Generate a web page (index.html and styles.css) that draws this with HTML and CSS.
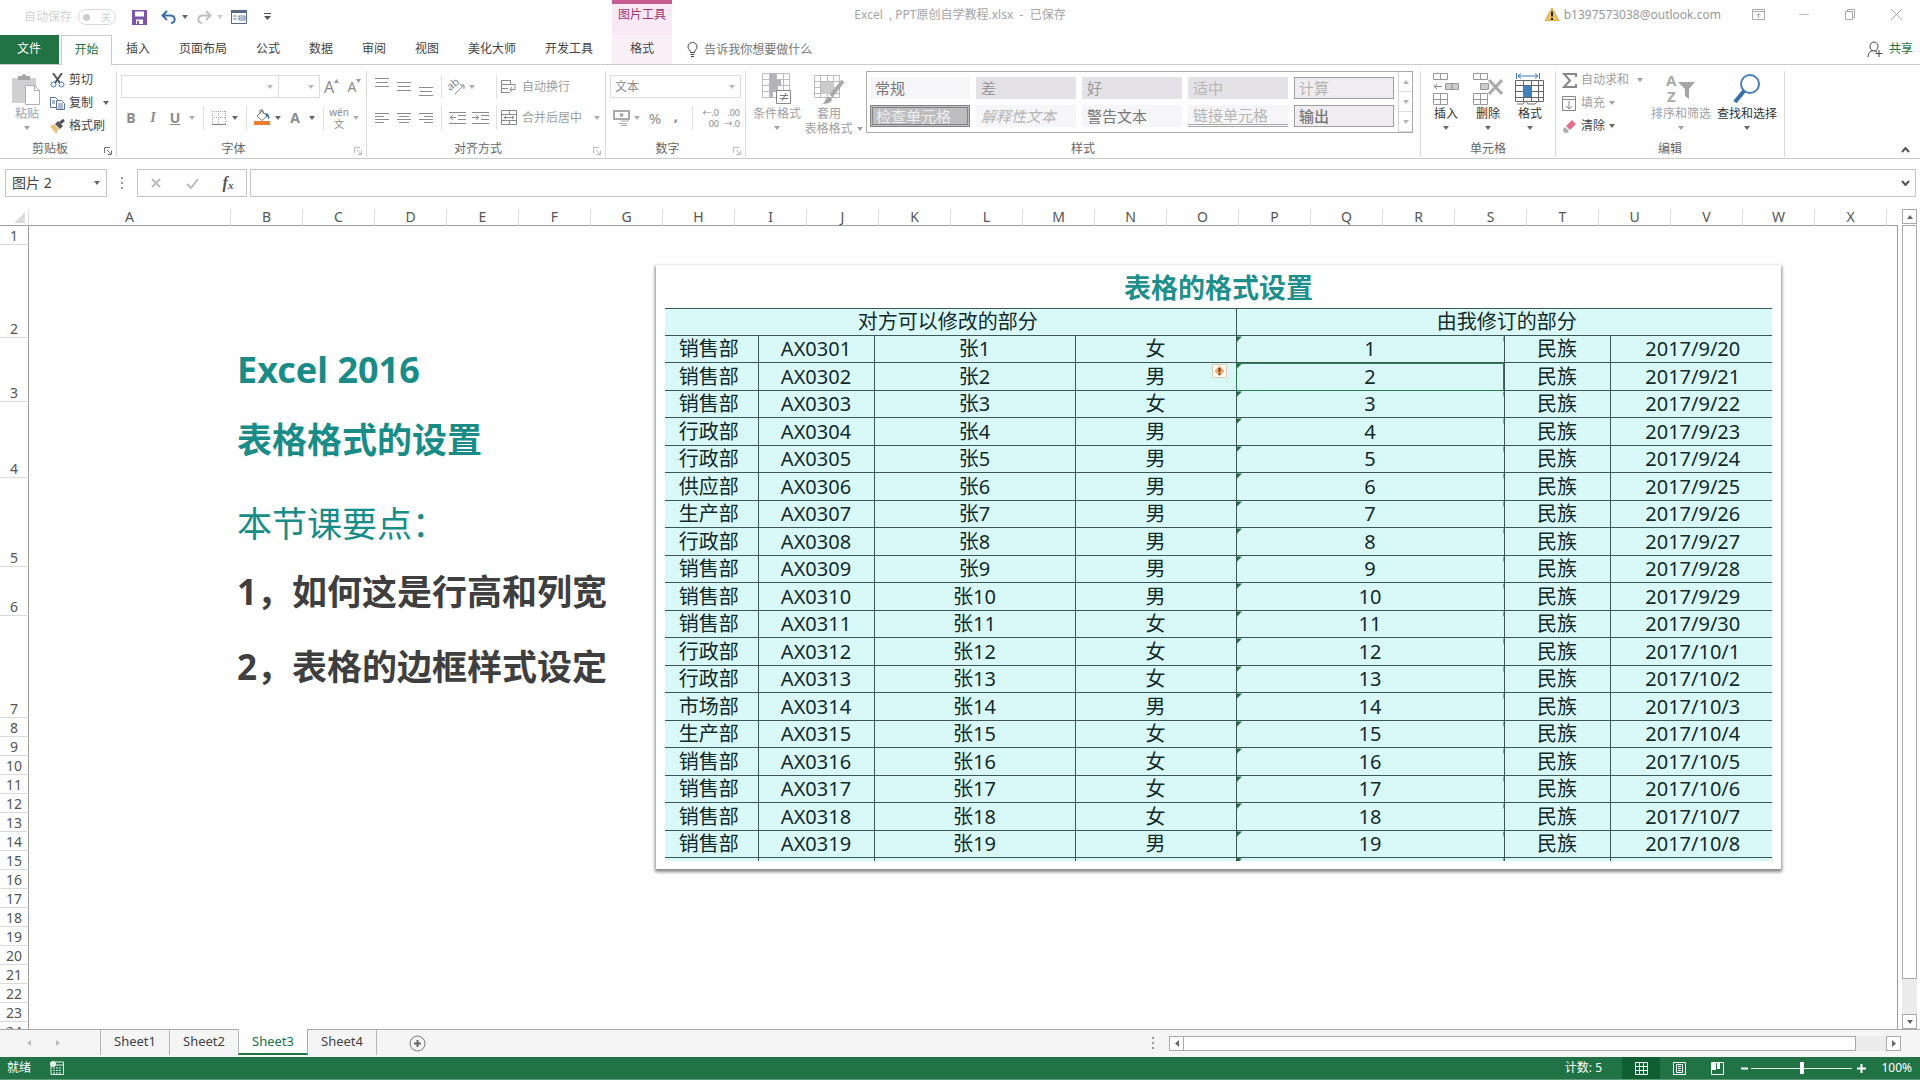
FILE: index.html
```html
<!DOCTYPE html>
<html lang="zh-CN">
<head>
<meta charset="utf-8">
<title>Excel , PPT原创自学教程.xlsx - 已保存</title>
<link rel="stylesheet" href="styles.css">
</head>
<body>
<svg class="defs" aria-hidden="true">
  <symbol id="caret" viewBox="0 0 6 4"><path d="M0 0h6L3 4z" fill="currentColor"/></symbol>
  <symbol id="launch" viewBox="0 0 8 8"><path d="M.5 6V.5H6M3 3l4 4M7.500 3.500v4h-4" fill="none" stroke="currentColor"/></symbol>
</svg>

<header class="titlebar">
  <div class="quick">
    <label class="autosave">自动保存<input type="checkbox" class="switch-input"><span class="switch"><i></i>关</span></label>
    <button class="q" aria-label="保存"><svg width="15" height="15"><path d="M0 0h15v15H0z" fill="#7a55a8"/><path d="M3 1.500h9v5H3zM4 9.500h7V14H4z" fill="#fff"/><path d="M5 11h2v3H5z" fill="#7a55a8"/></svg></button>
    <button class="q undo" aria-label="撤消"><svg width="16" height="14"><path d="M6 1L1.500 5.500 6 10M2 5.500h7c6 0 6 7 1 7.500" fill="none" stroke="#3f6da8" stroke-width="2"/></svg><svg class="caret"><use href="#caret"/></svg></button>
    <button class="q redo" aria-label="恢复"><svg width="16" height="14"><path d="M10 1l4.500 4.500L10 10M14 5.500H7c-6 0-6 7-1 7.500" fill="none" stroke="#bfc1c3" stroke-width="2"/></svg><svg class="caret"><use href="#caret"/></svg></button>
    <button class="q form" aria-label="记录单"><svg width="16" height="14"><path d="M.5.5h15v13H.5z" fill="#fff" stroke="#556a86"/><path d="M0 0h16v3H0z" fill="#556a86"/><path d="M2 6h4M2 9h4M8 6h6v4H8zM8 8h6" fill="none" stroke="#6a84a8"/></svg></button>
    <button class="q more" aria-label="自定义快速访问工具栏"><svg width="7" height="8"><path d="M0 .5h7" stroke="#555"/><path d="M0 3h7L3.500 7z" fill="#555"/></svg></button>
  </div>
  <div class="context-title">图片工具</div>
  <h1 class="doc-title">Excel&nbsp; , PPT原创自学教程.xlsx&nbsp; -&nbsp; 已保存</h1>
  <div class="account">
    <svg width="16" height="14"><path d="M8 1l7 12.500H1z" fill="#e9c46a" stroke="#d9ae4b" stroke-linejoin="round"/><path d="M8 4.500v5M8 11v2" stroke="#222" stroke-width="2"/></svg>
    <span>b1397573038@outlook.com</span>
  </div>
  <div class="window-buttons">
    <button aria-label="功能区显示选项"><svg width="13" height="11"><path d="M.5.500h12v10H.5zM.5 2.500h12M6.500 9V4.500M4.500 6.500l2-2 2 2" fill="none" stroke="#a9a9a9"/></svg></button>
    <button aria-label="最小化"><svg width="10" height="11"><path d="M0 5.500h10" stroke="#bbb"/></svg></button>
    <button aria-label="还原"><svg width="10" height="11"><path d="M.5 2.500h7v8h-7zM2.500 2.500v-2h7v8h-2" fill="none" stroke="#a9a9a9"/></svg></button>
    <button aria-label="关闭"><svg width="11" height="11"><path d="M0 0l11 11M11 0L0 11" stroke="#a9a9a9"/></svg></button>
  </div>
</header>

<nav class="tabs">
  <button class="tab file">文件</button>
  <button class="tab active">开始</button>
  <button class="tab">插入</button>
  <button class="tab">页面布局</button>
  <button class="tab">公式</button>
  <button class="tab">数据</button>
  <button class="tab">审阅</button>
  <button class="tab">视图</button>
  <button class="tab">美化大师</button>
  <button class="tab">开发工具</button>
  <button class="tab context">格式</button>
  <button class="tell-me"><svg width="11" height="15"><path d="M3.500 10.500C3.500 8 1 7.500 1 4.800a4.500 4.300 0 019 0c0 2.700-2.500 3.200-2.500 5.700zM3.500 12.500h4M4 14.500h3" fill="none" stroke="#444"/></svg>告诉我你想要做什么</button>
  <button class="share"><svg width="16" height="17"><path d="M1 16c0-4 2-6 5-6.500M7 1a4 4.500 0 010 9 4 4.500 0 010-9M8 10l2 1M12 9v7M8.500 12.500h7" fill="none" stroke="#444"/></svg>共享</button>
</nav>

<section class="ribbon" aria-label="功能区">
  <div class="group clipboard">
    <div class="body">
      <button class="big off"><svg width="30" height="32"><path d="M0 5h24v25H0z" fill="#d0d0d2"/><path d="M6 7V3h4a2 2 0 014 0h4v4z" fill="#a5a5a7"/><path d="M13.500 12.500h9l5 5v14h-14z" fill="#fff" stroke="#b0b0b2"/><path d="M22.500 12.500v5h5" fill="none" stroke="#b0b0b2"/></svg><span>粘贴</span><svg class="caret"><use href="#caret"/></svg></button>
      <div class="stack">
        <button class="line"><svg width="15" height="15"><path d="M3 0l7 10M12 0L5 10" stroke="#555" stroke-width="2"/><circle cx="3.500" cy="11.500" r="2.500" fill="none" stroke="#3f78b5"/><circle cx="11.500" cy="11.500" r="2.500" fill="none" stroke="#3f78b5"/></svg>剪切</button>
        <button class="line"><svg width="15" height="15"><path d="M.5 1.500h5l2 2v8h-7z" fill="#fff" stroke="#5a7394"/><path d="M6.500 4.500h5l3 3v6h-8z" fill="#fff" stroke="#5a7394"/><path d="M2 5h3M2 7h3M8 8h5M8 10h5M8 12h5" stroke="#5a7394"/></svg>复制<svg class="caret push"><use href="#caret"/></svg></button>
        <button class="line"><svg width="15" height="15"><path d="M0 7l4-2 5 5-3 5z" fill="#eac282"/><path d="M5 5l3-3 5 5-3 3z" fill="#555"/><path d="M10 4l4-3" stroke="#555" stroke-width="3"/></svg>格式刷</button>
      </div>
    </div>
    <div class="label launched">剪贴板<svg class="launch dark"><use href="#launch"/></svg></div>
  </div>

  <div class="group font">
    <div class="body rows">
      <div class="row font-top">
        <select aria-label="字体" class="combo"><option></option></select>
        <select aria-label="字号" class="combo"><option></option></select>
        <button class="glyph" aria-label="增大字号">A<svg width="5" height="4"><path d="M0 4l2.500-4L5 4z" fill="#999"/></svg></button>
        <button class="glyph small" aria-label="减小字号">A<svg width="5" height="4"><path d="M0 0h5L2.500 4z" fill="#999"/></svg></button>
      </div>
      <div class="row font-bottom">
        <button class="bold">B</button><button class="italic">I</button><button class="under">U</button><svg class="caret"><use href="#caret"/></svg><i class="sep"></i>
        <button aria-label="边框"><svg width="14" height="14"><path d="M0 .5h14M0 6.500h14M.5 0v14M6.500 0v14M13.500 0v14" stroke="#a8a8b4" stroke-dasharray="1 1"/><path d="M0 13.500h14" stroke="#888"/></svg></button><svg class="caret dark"><use href="#caret"/></svg><i class="sep"></i>
        <button aria-label="填充颜色"><svg width="17" height="17"><path d="M3 7l5-5 5 5-5 4.500z" fill="#fff" stroke="#777"/><path d="M6 5V1h3v4" fill="none" stroke="#777"/><path d="M11 4c4 0 5 3 4 7-1-3-3-4-4-7" fill="#3f78b5"/><path d="M0 12h16v4H0z" fill="#ed7d31"/></svg></button><svg class="caret dark"><use href="#caret"/></svg>
        <button class="bold">A</button><svg class="caret dark"><use href="#caret"/></svg><i class="sep"></i>
        <button class="pinyin"><span>wén</span><span>文</span></button><svg class="caret"><use href="#caret"/></svg>
      </div>
    </div>
    <div class="label launched">字体<svg class="launch"><use href="#launch"/></svg></div>
  </div>

  <div class="group align">
    <div class="body rows">
      <div class="row align-row">
        <button aria-label="顶端对齐"><svg width="14" height="18"><path d="M0 .5h14M1 4.500h12M0 8.500h14" stroke="#8c8c8c"/></svg></button>
        <button aria-label="垂直居中"><svg width="14" height="18"><path d="M0 4.500h14M1 8.500h12M0 12.500h14" stroke="#8c8c8c"/></svg></button>
        <button aria-label="底端对齐"><svg width="14" height="18"><path d="M0 9.500h14M1 13.500h12M0 17.500h14" stroke="#8c8c8c"/></svg></button>
        <i class="sep"></i>
        <button aria-label="方向"><svg width="17" height="16" class="spill"><text x="0" y="9" transform="rotate(-40 5 9)" font-size="11" fill="#888">ab</text><path d="M6 15l9-9M11 6h4v4" fill="none" stroke="#888"/></svg></button><svg class="caret"><use href="#caret"/></svg><i class="sep"></i>
        <button class="text off"><svg width="16" height="15"><path d="M0 1.500h9M0 5.500h7M0 9.500h7M0 13.500h9M.5 1v13M9.500 1v4M5 5.500h9v5h-5M11 8l-2 2.500 2 2.500" fill="none" stroke="#8c8c8c"/></svg>自动换行</button>
      </div>
      <div class="row align-row">
        <button aria-label="左对齐"><svg width="14" height="14"><path d="M0 2.500h14M0 5.500h9M0 8.500h14M0 11.500h9" stroke="#8c8c8c"/></svg></button>
        <button aria-label="居中"><svg width="14" height="14"><path d="M0 2.500h14M2 5.500h10M0 8.500h14M2 11.500h10" stroke="#8c8c8c"/></svg></button>
        <button aria-label="右对齐"><svg width="14" height="14"><path d="M0 2.500h14M5 5.500h9M0 8.500h14M5 11.500h9" stroke="#8c8c8c"/></svg></button>
        <i class="sep"></i>
        <button aria-label="减少缩进量"><svg width="17" height="14"><path d="M0 1.500h17M9 4.500h8M9 8.500h8M0 12.500h17M1 6.500h6M4 4L1 6.500 4 9" fill="none" stroke="#8c8c8c"/></svg></button>
        <button aria-label="增加缩进量"><svg width="17" height="14"><path d="M0 1.500h17M9 4.500h8M9 8.500h8M0 12.500h17M0 6.500h6M4 4l3 2.500L4 9" fill="none" stroke="#8c8c8c"/></svg></button>
        <i class="sep"></i>
        <button class="text off"><svg width="16" height="15"><path d="M.5.500h15v14H.500zM0 4.500h16M0 10.500h16M8.500 0v4M8.500 11v4M3 7.500h10M5 6L3 7.500 5 9M11 6l2 1.500L11 9" fill="none" stroke="#8c8c8c"/></svg>合并后居中<svg class="caret push"><use href="#caret"/></svg></button>
      </div>
    </div>
    <div class="label launched">对齐方式<svg class="launch"><use href="#launch"/></svg></div>
  </div>

  <div class="group number">
    <div class="body rows">
      <div class="row"><select aria-label="数字格式" class="combo format"><option>文本</option></select></div>
      <div class="row number-bottom">
        <button aria-label="会计数字格式"><svg width="17" height="16"><path d="M1 1h15v8H1z" fill="none" stroke="#aaa" stroke-width="2"/><circle cx="8.500" cy="5" r="2" fill="#aaa"/><path d="M8 11h8M6 13.500h8M8 15.500h6" stroke="#aaa"/></svg></button><svg class="caret"><use href="#caret"/></svg>
        <button class="pct">%</button><button class="pct comma">,</button><i class="sep"></i>
        <button class="dec"><span>←.0</span><span>00</span></button>
        <button class="dec"><span>.00</span><span>→.0</span></button>
      </div>
    </div>
    <div class="label launched">数字<svg class="launch"><use href="#launch"/></svg></div>
  </div>

  <div class="group styles">
    <div class="body">
      <button class="big off wide"><svg width="30" height="32"><path d="M.5.500h27v24H.500zM0 6.500h28M0 12.500h28M0 18.500h28M7.500 0v25M14.500 0v25M21.500 0v25" fill="#fff" stroke="#bbb"/><path d="M8 1h6v6h5v6h-3v6h-5v6H8z" fill="#b4b4b6"/><path d="M14.500 17.500h14v13h-14z" fill="#fff" stroke="#888"/><path d="M18 22.500h8M18 25.500h8M24 20l-4 8" stroke="#777"/></svg><span>条件格式</span><svg class="caret"><use href="#caret"/></svg></button>
      <button class="big off wide"><svg width="30" height="32"><path d="M.5 2.500h25v22H.5zM0 8.500h26M0 14.500h26M0 20.500h26M6.500 2v22M13.500 2v22M19.500 2v22" fill="#fff" stroke="#bbb"/><path d="M7 9h13v12H7z" fill="#ccc"/><path d="M29 8L17 23" stroke="#aaa" stroke-width="4"/><path d="M8 31c4-1 2-6 7-7 5 1 4 7-7 7z" fill="#a5a5a5"/></svg><span>套用</span><span class="with-caret">表格格式 <svg class="caret"><use href="#caret"/></svg></span></button>
      <div class="gallery">
        <div class="swatches">
          <button class="sw">常规</button><button class="sw gray">差</button><button class="sw gray">好</button><button class="sw gray faint">适中</button><button class="sw boxed faint">计算</button>
          <button class="sw check">检查单元格</button><button class="sw faint italic-sw">解释性文本</button><button class="sw">警告文本</button><button class="sw faint linked">链接单元格</button><button class="sw boxed output">输出</button>
        </div>
        <div class="gallery-scroll">
          <button aria-label="上一行"><svg class="caret flip"><use href="#caret"/></svg></button>
          <button aria-label="下一行"><svg class="caret"><use href="#caret"/></svg></button>
          <button aria-label="其他"><svg class="caret"><use href="#caret"/></svg></button>
        </div>
      </div>
    </div>
    <div class="label">样式</div>
  </div>

  <div class="group cells">
    <div class="body">
      <button class="big"><svg width="28" height="32"><path d="M1.500.500h14v6h-14zM8.500 0v7M1.500 20.500h14v11h-14zM8.500 20v12M1 26.500h15" fill="#fff" stroke="#999"/><path d="M13.500 10.500h13v6h-13z" fill="#ccc" stroke="#999"/><path d="M20 10v7M2 13.500h8M5 11l-3 2.500L5 16" fill="none" stroke="#888"/></svg><span>插入</span><svg class="caret"><use href="#caret"/></svg></button>
      <button class="big"><svg width="30" height="32"><path d="M.5.500h14v6H.500zM7.500 0v7M.5 20.500h14v11H.500zM7.500 20v12M0 26.500h15" fill="#fff" stroke="#999"/><path d="M7.500 10.500h8v6h-8z" fill="#ccc" stroke="#999"/><path d="M16 7l13 14M29 7L16 21" stroke="#aaa" stroke-width="3"/></svg><span>删除</span><svg class="caret"><use href="#caret"/></svg></button>
      <button class="big"><svg width="30" height="32"><path d="M1.500 0v6M24.500 0v6M3 3h20M6 .5L3 3l3 2.500M20 .5L23 3l-3 2.500" fill="none" stroke="#3f78b5"/><path d="M.5 7.500h28v21H.5zM0 12.500h29M0 18.500h29M0 24.500h29M8.500 7v22M16.500 7v22M23.500 7v22" fill="#fff" stroke="#666"/><path d="M8 13h9v11H8z" fill="#3f83bd"/><path d="M2 31h6l3-3 2 3h7l3-3" fill="none" stroke="#777"/></svg><span>格式</span><svg class="caret"><use href="#caret"/></svg></button>
    </div>
    <div class="label">单元格</div>
  </div>

  <div class="group editing">
    <div class="body">
      <div class="stack">
        <button class="line off"><svg width="15" height="15"><path d="M14 4V1H2l6 6.500L2 14h12v-3" fill="none" stroke="#888" stroke-width="2"/></svg>自动求和<svg class="caret push"><use href="#caret"/></svg></button>
        <button class="line off"><svg width="15" height="15"><path d="M.5.500h13v14H.500zM0 3.500h14M7 5v8M4 10l3 3 3-3" fill="none" stroke="#888"/></svg>填充<svg class="caret near"><use href="#caret"/></svg></button>
        <button class="line"><svg width="15" height="15"><path d="M4 7l6-6 4 4-6 6z" fill="#e0708c"/><path d="M3 8l4 4-2 2H3L1 12v-2z" fill="#b0b0b4"/></svg>清除<svg class="caret near"><use href="#caret"/></svg></button>
      </div>
      <button class="big off five"><svg width="30" height="32" class="spill"><text x="0" y="13" font-size="15" font-weight="700" fill="#aaa">A</text><text x="1" y="29" font-size="15" font-weight="700" fill="#aaa">Z</text><path d="M12 9h17l-6 7v10l-4-3v-7z" fill="#a5a5a5"/></svg><span>排序和筛选</span><svg class="caret"><use href="#caret"/></svg></button>
      <button class="big five"><svg width="30" height="32"><circle cx="18" cy="11" r="9" fill="none" stroke="#4a7fb8" stroke-width="2"/><path d="M12 18L3 29" stroke="#3a6ea8" stroke-width="4"/></svg><span>查找和选择</span><svg class="caret"><use href="#caret"/></svg></button>
    </div>
    <div class="label">编辑</div>
  </div>
  <button class="collapse" aria-label="折叠功能区"><svg width="9" height="6"><path d="M1 5l3.500-4L8 5" fill="none" stroke="#555" stroke-width="2"/></svg></button>
</section>

<section class="formula-bar">
  <div class="name-box"><input aria-label="名称框" value="图片 2"><svg class="caret"><use href="#caret"/></svg></div>
  <i class="dots"></i>
  <div class="fx-buttons">
    <button aria-label="取消"><svg width="10" height="10"><path d="M1 1l8 8M9 1L1 9" stroke="#bbb" stroke-width="2"/></svg></button>
    <button aria-label="输入"><svg width="13" height="11"><path d="M1 6l4 4 7-9" fill="none" stroke="#bbb" stroke-width="2"/></svg></button>
    <button class="fx">f<small>x</small></button>
  </div>
  <div class="formula"><input aria-label="编辑栏"><svg width="9" height="6"><path d="M1 1l3.500 4L8 1" fill="none" stroke="#555" stroke-width="2"/></svg></div>
</section>

<main class="workspace">
  <div class="canvas">
    <table class="sheet">
      <colgroup><col class="c-head"><col class="c-a"><col class="c-n" span="23"><col></colgroup>
      <thead><tr><th class="corner"><svg width="11" height="11"><path d="M11 0v11H0z" fill="#dcdcdc"/></svg></th><th>A</th><th>B</th><th>C</th><th>D</th><th>E</th><th>F</th><th>G</th><th>H</th><th>I</th><th>J</th><th>K</th><th>L</th><th>M</th><th>N</th><th>O</th><th>P</th><th>Q</th><th>R</th><th>S</th><th>T</th><th>U</th><th>V</th><th>W</th><th>X</th><th class="rest"></th></tr></thead>
      <tbody>
        <tr><th>1</th><td></td><td colspan="24"></td></tr>
        <tr class="r2"><th>2</th><td></td><td colspan="24"></td></tr>
        <tr class="r3"><th>3</th><td></td><td colspan="24" class="teal strong latin">Excel 2016</td></tr>
        <tr class="r4"><th>4</th><td></td><td colspan="24" class="teal strong">表格格式的设置</td></tr>
        <tr class="r5"><th>5</th><td></td><td colspan="24" class="teal">本节课要点<span class="colon">：</span></td></tr>
        <tr class="r6"><th>6</th><td></td><td colspan="24" class="strong">1，如何这是行高和列宽</td></tr>
        <tr class="r7"><th>7</th><td></td><td colspan="24" class="strong">2，表格的边框样式设定</td></tr>
        <tr><th>8</th><td></td><td colspan="24"></td></tr>
        <tr><th>9</th><td></td><td colspan="24"></td></tr>
        <tr><th>10</th><td></td><td colspan="24"></td></tr>
        <tr><th>11</th><td></td><td colspan="24"></td></tr>
        <tr><th>12</th><td></td><td colspan="24"></td></tr>
        <tr><th>13</th><td></td><td colspan="24"></td></tr>
        <tr><th>14</th><td></td><td colspan="24"></td></tr>
        <tr><th>15</th><td></td><td colspan="24"></td></tr>
        <tr><th>16</th><td></td><td colspan="24"></td></tr>
        <tr><th>17</th><td></td><td colspan="24"></td></tr>
        <tr><th>18</th><td></td><td colspan="24"></td></tr>
        <tr><th>19</th><td></td><td colspan="24"></td></tr>
        <tr><th>20</th><td></td><td colspan="24"></td></tr>
        <tr><th>21</th><td></td><td colspan="24"></td></tr>
        <tr><th>22</th><td></td><td colspan="24"></td></tr>
        <tr><th>23</th><td></td><td colspan="24"></td></tr>
        <tr><th>24</th><td></td><td colspan="24"></td></tr>
      </tbody>
    </table>

    <figure class="picture">
      <table class="data">
        <caption>表格的格式设置</caption>
        <colgroup><col class="d1"><col class="d2"><col class="d3"><col class="d4"><col class="d5"><col class="d6"><col class="d7"></colgroup>
        <thead><tr><th colspan="4">对方可以修改的部分</th><th colspan="3">由我修订的部分</th></tr></thead>
        <tbody>
          <tr><td>销售部</td><td>AX0301</td><td>张1</td><td>女</td><td>1</td><td>民族</td><td>2017/9/20</td></tr>
          <tr><td>销售部</td><td>AX0302</td><td>张2</td><td class="flagged">男<svg class="alert" width="15" height="14"><path d="M.5.500h14v13H.500z" fill="#fff" stroke="#e3c9b4"/><path d="M7.500 1.500l5 5.500-5 5.500-5-5.500z" fill="#f0a868"/><path d="M7.500 4v4M7.500 9v1.500" stroke="#6b3d1c" stroke-width="2"/></svg></td><td class="picked">2</td><td>民族</td><td>2017/9/21</td></tr>
          <tr><td>销售部</td><td>AX0303</td><td>张3</td><td>女</td><td>3</td><td>民族</td><td>2017/9/22</td></tr>
          <tr><td>行政部</td><td>AX0304</td><td>张4</td><td>男</td><td>4</td><td>民族</td><td>2017/9/23</td></tr>
          <tr><td>行政部</td><td>AX0305</td><td>张5</td><td>男</td><td>5</td><td>民族</td><td>2017/9/24</td></tr>
          <tr><td>供应部</td><td>AX0306</td><td>张6</td><td>男</td><td>6</td><td>民族</td><td>2017/9/25</td></tr>
          <tr><td>生产部</td><td>AX0307</td><td>张7</td><td>男</td><td>7</td><td>民族</td><td>2017/9/26</td></tr>
          <tr><td>行政部</td><td>AX0308</td><td>张8</td><td>男</td><td>8</td><td>民族</td><td>2017/9/27</td></tr>
          <tr><td>销售部</td><td>AX0309</td><td>张9</td><td>男</td><td>9</td><td>民族</td><td>2017/9/28</td></tr>
          <tr><td>销售部</td><td>AX0310</td><td>张10</td><td>男</td><td>10</td><td>民族</td><td>2017/9/29</td></tr>
          <tr><td>销售部</td><td>AX0311</td><td>张11</td><td>女</td><td>11</td><td>民族</td><td>2017/9/30</td></tr>
          <tr><td>行政部</td><td>AX0312</td><td>张12</td><td>女</td><td>12</td><td>民族</td><td>2017/10/1</td></tr>
          <tr><td>行政部</td><td>AX0313</td><td>张13</td><td>女</td><td>13</td><td>民族</td><td>2017/10/2</td></tr>
          <tr><td>市场部</td><td>AX0314</td><td>张14</td><td>男</td><td>14</td><td>民族</td><td>2017/10/3</td></tr>
          <tr><td>生产部</td><td>AX0315</td><td>张15</td><td>女</td><td>15</td><td>民族</td><td>2017/10/4</td></tr>
          <tr><td>销售部</td><td>AX0316</td><td>张16</td><td>女</td><td>16</td><td>民族</td><td>2017/10/5</td></tr>
          <tr><td>销售部</td><td>AX0317</td><td>张17</td><td>女</td><td>17</td><td>民族</td><td>2017/10/6</td></tr>
          <tr><td>销售部</td><td>AX0318</td><td>张18</td><td>女</td><td>18</td><td>民族</td><td>2017/10/7</td></tr>
          <tr><td>销售部</td><td>AX0319</td><td>张19</td><td>男</td><td>19</td><td>民族</td><td>2017/10/8</td></tr>
          <tr class="stub"><td></td><td></td><td></td><td></td><td></td><td></td><td></td></tr>
        </tbody>
      </table>
    </figure>
  </div>
  <div class="vscroll">
    <button class="arrow" aria-label="向上滚动"><svg class="caret flip"><use href="#caret"/></svg></button>
    <div class="thumb"></div><div class="track"></div>
    <button class="arrow" aria-label="向下滚动"><svg class="caret"><use href="#caret"/></svg></button>
  </div>
</main>

<footer class="sheetbar">
  <div class="sheet-nav"><button aria-label="上一张"><svg width="4" height="6"><path d="M4 0v6L0 3z" fill="#bbb"/></svg></button><button aria-label="下一张"><svg width="4" height="6"><path d="M0 0v6l4-3z" fill="#bbb"/></svg></button></div>
  <button class="sheet-tab">Sheet1</button><button class="sheet-tab">Sheet2</button><button class="sheet-tab current">Sheet3</button><button class="sheet-tab last">Sheet4</button>
  <button class="add" aria-label="新工作表"><svg width="17" height="17"><circle cx="8.500" cy="8.500" r="7.500" fill="none" stroke="#777"/><path d="M8.500 5v7M5 8.500h7" stroke="#666" stroke-width="2"/></svg></button>
  <i class="dots hdots"></i>
  <div class="hscroll">
    <button class="arrow" aria-label="向左滚动"><svg width="4" height="7"><path d="M4 0v7L0 3.500z" fill="#666"/></svg></button>
    <div class="thumb"></div><div class="track"></div>
    <button class="arrow" aria-label="向右滚动"><svg width="4" height="7"><path d="M0 0v7l4-3.500z" fill="#666"/></svg></button>
  </div>
</footer>

<div class="status">
  <span>就绪</span>
  <svg class="macro" width="14" height="14"><path d="M1 4h12.500v9.500H1zM5 1h8.500v3" fill="none" stroke="#e4f3ea"/><path d="M3 7h9M3 9.500h9M3 12h9" stroke="#e4f3ea" stroke-dasharray="2 1"/><circle cx="3" cy="3" r="3" fill="#e4f3ea"/></svg>
  <span class="count">计数: 5</span>
  <button class="view on" aria-label="普通"><svg width="13" height="13"><path d="M.5.500h12v12H.500zM4.500 0v13M8.500 0v13M0 4.500h13M0 8.500h13" fill="none" stroke="#fff"/></svg></button>
  <button class="view" aria-label="页面布局"><svg width="13" height="13"><path d="M.5.500h12v12H.500zM3.500 2.500h6v8h-6zM5 4.500h3M5 6.500h3M5 8.500h3" fill="none" stroke="#fff"/></svg></button>
  <button class="view" aria-label="分页预览"><svg width="13" height="13"><path d="M.5.500h12v12H.500z" fill="none" stroke="#fff"/><path d="M1 1h4v7H1zM6 1h3v6H6z" fill="#fff"/></svg></button>
  <button class="zoom-step" aria-label="缩小"><svg width="7" height="7"><path d="M0 3.500h7" stroke="#fff" stroke-width="2"/></svg></button>
  <input type="range" class="zoom" aria-label="显示比例" min="0" max="100" value="50">
  <button class="zoom-step" aria-label="放大"><svg width="9" height="9"><path d="M0 4.500h9M4.500 0v9" stroke="#fff" stroke-width="2"/></svg></button>
  <span class="percent">100%</span>
</div>
</body>
</html>
```
FILE: styles.css
```css
* { box-sizing: border-box; }

body {
  margin: 0;
  height: 100vh;
  display: flex;
  flex-direction: column;
  overflow: hidden;
  background: #fdfefd;
  color: #444;
  font: 12px/16px "Noto Sans", "Noto Sans CJK SC", sans-serif;
}

button, input, select {
  font: inherit;
  color: inherit;
  margin: 0;
  padding: 0;
  border: 0;
  background: none;
  border-radius: 0;
  white-space: nowrap;
}

svg { display: block; flex: none; }
.defs { width: 0; height: 0; position: absolute; }
.spill { overflow: visible; }
.caret { width: 6px; height: 4px; color: #666; }
.flip { transform: rotate(180deg); }

/* title bar */
.titlebar {
  height: 35px;
  flex: none;
  display: grid;
  grid-template-columns: 612px 60px 1fr auto auto;
  position: relative;
}
.quick { display: flex; align-items: center; padding: 0 0 1px 24px; }
.quick .caret { margin-left: 5px; }
.q { display: flex; align-items: center; margin-left: 14px; }
.autosave { display: flex; align-items: center; gap: 6px; color: #d2d2d2; }
.autosave + .q { margin-left: 16px; }
.switch-input { position: absolute; opacity: 0; }
.switch {
  width: 38px;
  height: 16px;
  border: 1px solid #d8d8d8;
  border-radius: 8px;
  display: flex;
  align-items: center;
  justify-content: space-between;
  padding: 0 4px;
  font-size: 10px;
}
.switch i { width: 7px; height: 7px; border-radius: 4px; background: #ccc; }
.redo, .redo .caret { color: #ccc; }
.q.redo { margin-left: 8px; }
.q.form { margin-left: 8px; }
.q.more { margin-left: 17px; }
.context-title {
  border-top: 4px solid #c75b90;
  background: #f9e9f4;
  color: #a03672;
  text-align: center;
  padding-top: 3px;
}
.doc-title {
  position: absolute;
  left: 0;
  right: 0;
  top: 7px;
  margin: 0;
  text-align: center;
  font-size: 12px;
  font-weight: 400;
  color: #a5a5a5;
}
.account { grid-column: 4; display: flex; gap: 4px; padding-top: 7px; color: #999; }
.window-buttons { display: flex; align-items: flex-start; padding: 9px 1px 0 0; margin-left: 14px; }
.window-buttons button { width: 46px; height: 12px; display: flex; justify-content: center; }

/* ribbon tabs */
.tabs { height: 30px; flex: none; display: flex; border-bottom: 1px solid #c9cdca; }
.tab { padding: 0 15px 1px 14px; color: #444; }
.tab.file { width: 59px; background: #217346; color: #fff; margin-right: 2px; }
.tab.active {
  width: 51px;
  padding: 0 0 2px;
  border: 1px solid #c9cdca;
  border-bottom: 0;
  background: #fdfefd;
  margin-bottom: -1px;
  color: #217346;
}
.tab.context { margin-left: 4px; width: 60px; padding: 0 0 1px; background: #f9eff7; }
.tell-me { display: flex; align-items: center; gap: 6px; margin-left: 15px; color: #767676; }
.share { display: flex; align-items: center; gap: 6px; margin-left: auto; padding: 0 7px 1px 0; color: #217346; }

/* ribbon */
.ribbon { height: 94px; flex: none; display: flex; padding-top: 6px; border-bottom: 1px solid #c9cdca; }
.group { height: 86px; display: flex; flex-direction: column; border-right: 1px solid #dadcda; flex: none; }
.body { height: 70px; display: flex; }
.label { height: 16px; line-height: 16px; text-align: center; color: #666; position: relative; }
.launched { padding-right: 16px; }
.launch { position: absolute; right: 4px; top: 6px; width: 8px; height: 8px; color: #bbb; }
.launch.dark { color: #777; }
.clipboard { width: 117px; }
.font { width: 250px; }
.align { width: 239px; }
.number { width: 140px; }
.styles { width: 675px; }
.cells { width: 135px; }
.editing { width: 229px; }

.big { width: 42px; display: flex; flex-direction: column; align-items: center; padding-top: 2px; color: #333; }
.big > span { line-height: 15px; }
.big > svg:first-child + span { padding-top: 1px; }
.big > .caret { margin-top: 5px; }
.big.wide { width: 52px; }
.big.five { width: 66px; }
.off, .off .caret { color: #a0a0a0; }
.with-caret { display: flex; align-items: center; gap: 4px; margin-left: 9px; }
.clipboard .body { padding-left: 6px; }
.stack { display: flex; flex-direction: column; }
.line { height: 23px; display: flex; align-items: center; gap: 4px; }
.stack .line { padding: 0 0 5px; }
.clipboard .line { margin-left: 2px; }
.line .caret { margin-left: 4px; }
.line .near { margin-left: 0; }
.push { margin-left: 8px; }
.clipboard .push { margin-left: 6px; }

.rows { flex-direction: column; }
.row { height: 31px; display: flex; align-items: center; color: #8c8c8c; }
.row .caret { color: #b0b0b0; justify-self: center; }
.row .caret.dark { color: #666; }
.row button { display: flex; align-items: center; justify-content: center; }
.sep { width: 1px; height: 24px; background: #dfe1df; justify-self: center; }
.combo {
  appearance: none;
  height: 23px;
  border: 1px solid #dcdcdc;
  padding: 0 4px;
  background: url("data:image/svg+xml,%3Csvg xmlns='http://www.w3.org/2000/svg' width='6' height='4'%3E%3Cpath d='M0 0h6L3 4z' fill='%23bbb'/%3E%3C/svg%3E") no-repeat right 5px center;
}
.font-top { display: grid; grid-template-columns: 158px 41px 23px 23px; padding-left: 4px; }
.combo + .combo { border-left: 0; }
.row .glyph { font-size: 16px; align-items: flex-start; }
.row .glyph.small { font-size: 14px; }
.font-bottom {
  display: grid;
  grid-template-columns: 22px 22px 22px 12px 10px 22px 10px 12px 20px 12px 22px 12px 10px 22px 12px;
  padding-left: 3px;
  font-size: 14px;
}
.row .bold { font-weight: 700; }
.italic { font-family: "Liberation Serif", serif; font-style: italic; font-weight: 700; }
.under { text-decoration: underline; font-weight: 700; }
.row .pinyin { flex-direction: column; font-size: 10px; line-height: 12px; }
.align-row { display: grid; grid-template-columns: 22px 22px 22px 9px 23px 23px 9px 1fr; padding-left: 4px; }
.align-row .caret { margin-right: 18px; }
.align-row .text { justify-content: flex-start; gap: 5px; }
.align-row .text .caret { margin: 0 0 0 7px; }
.format { width: 131px; margin-left: 4px; }
.number-bottom { display: grid; grid-template-columns: 18px 14px 22px 20px 12px 21px 21px; padding-left: 6px; }
.row .pct { font-size: 15px; }
.row .comma { font-weight: 700; padding-bottom: 6px; }
.row .dec { flex-direction: column; font-size: 9px; line-height: 11px; align-items: flex-end; }

.styles .body { padding-left: 5px; }
.gallery { display: flex; margin-left: 11px; height: 62px; border: 1px solid #a9aba9; }
.swatches { display: grid; grid-template-columns: repeat(5, 100px); gap: 6px; align-content: start; padding: 5px 4px 0 3px; }
.sw { height: 22px; font-size: 15px; line-height: 20px; text-align: left; padding-left: 5px; background: #f6f5f7; color: #777; }
.gray { background: #e4e2e6; color: #999; }
.faint { color: #b5b5b5; }
.boxed { border: 1px solid #a0a0a0; background: #efedf1; padding-left: 4px; }
.output { color: #777; font-weight: 500; }
.check { border: 3px double #858585; background: #bdbdbf; color: #eee; padding-left: 3px; line-height: 16px; }
.italic-sw { font-style: italic; }
.linked { border-bottom: 3px double #aaa; }
.gallery-scroll { width: 14px; border-left: 1px solid #d5d5d5; display: grid; grid-template-rows: repeat(3, 20px); }
.gallery-scroll button { display: flex; align-items: center; justify-content: center; border-bottom: 1px solid #ddd; }
.gallery-scroll .caret { color: #b5b5b5; }
.cells .body { padding-left: 4px; }
.editing .body { padding-left: 6px; }
.editing .stack { width: 86px; }
.collapse { margin: auto 10px 5px auto; }

/* formula bar */
.formula-bar { flex: none; display: flex; align-items: center; height: 50px; padding: 10px 4px 12px 5px; }
.name-box, .fx-buttons, .formula { height: 28px; border: 1px solid #c2c5c3; display: flex; align-items: center; }
.name-box { width: 102px; padding: 0 6px; }
.name-box input { width: 82px; font-size: 14px; }
.dots { width: 2px; height: 12px; margin: 0 14px; background: repeating-linear-gradient(#999 0 2px, transparent 2px 5px); }
.fx-buttons { width: 110px; }
.fx-buttons button { width: 36px; display: flex; align-items: center; justify-content: center; }
.fx-buttons .fx { font: italic 700 16px/20px "Liberation Serif", serif; color: #555; }
.fx small { font-size: 11px; padding-top: 4px; }
.formula { flex: 1; margin-left: 3px; padding: 0 5px; }
.formula input { flex: 1; }

/* worksheet */
.workspace { flex: 1; min-height: 0; display: flex; gap: 4px; padding-right: 3px; }
.canvas { flex: 1; min-width: 0; position: relative; overflow: hidden; }
.sheet { width: 100%; table-layout: fixed; border-collapse: separate; border-spacing: 0; }
.c-head { width: 29px; }
.c-a { width: 202px; }
.c-n { width: 72px; }
.sheet th { font-weight: 400; font-size: 14px; line-height: 16px; padding: 0; color: #555; }
.sheet thead th { height: 17px; border-bottom: 1px solid #9b9d9b; border-right: 1px solid #dcdedc; }
.sheet thead .rest { border-right: 0; }
.sheet .corner svg { margin-left: 14px; }
.sheet tbody tr { height: 19px; }
.sheet tbody th { vertical-align: bottom; border-right: 1px solid #9b9d9b; border-bottom: 1px solid #d9dbd9; }
.sheet td { padding: 0 0 0 6px; font-size: 35px; line-height: 40px; color: #3f3f3f; }
.sheet tr:last-child td, .sheet td:nth-child(2) { padding: 0; }
.sheet tbody td:last-child { border-right: 1px solid #9b9d9b; }
.sheet .teal { color: #1a8c88; }
.sheet .strong { font-weight: 700; }
.sheet .latin { font-size: 36px; }
.colon { font-family: "Noto Sans CJK TC", sans-serif; }
.sheet .r2 { height: 93px; }
.sheet .r3 { height: 64px; }
.sheet .r4 { height: 76px; }
.sheet .r5 { height: 89px; }
.sheet .r6 { height: 49px; }
.sheet .r7 { height: 102px; }

/* picture placed on the worksheet */
.picture {
  position: absolute;
  left: 656px;
  top: 56px;
  margin: 0;
  width: 1125px;
  padding: 0 9px 8px;
  background: #fff;
  box-shadow: 0 2px 3px 1px #8a8a8a;
}
.data { width: 1107px; table-layout: fixed; border-collapse: collapse; color: #122a2a; font-size: 20px; line-height: 24px; }
.data caption { height: 43px; line-height: 46px; font-size: 27px; font-weight: 700; color: #1f8f8b; }
.d1 { width: 93px; }
.d2 { width: 116px; }
.d3 { width: 201px; }
.d4 { width: 161px; }
.d5 { width: 268px; }
.d6 { width: 106px; }
.d7 { width: 162px; }
.data tr { height: 27px; }
.data tbody tr:nth-child(even) { height: 28px; }
.data th, .data td { padding: 0; text-align: center; font-weight: 400; background-color: #d9f9f8; border: 1px solid #3b5758; }
.data tr > :first-child { border-left: 0; padding-right: 5px; }
.data tr > :last-child { border-right: 0; }
.data th:last-child { padding-left: 5px; }
.data td:last-child { padding-left: 3px; }
.data td:nth-child(5) { background-image: linear-gradient(135deg, #1c6b35 4px, transparent 4px); }
.data .picked { outline: 1px solid #2a7d4f; outline-offset: -1px; }
.data .flagged { position: relative; }
.alert { position: absolute; right: 9px; top: 1px; }
.data tbody tr.stub { height: 3px; }
.data .stub td { border-bottom: 0; }

.vscroll { width: 15px; display: flex; flex-direction: column; }
.arrow { width: 15px; height: 15px; flex: none; border: 1px solid #a9aba9; background: #fff; display: flex; align-items: center; justify-content: center; }
.thumb { border: 1px solid #a9aba9; background: #fdfefd; }
.track { background: #ececec; }
.vscroll .thumb { flex: 755; margin-top: 1px; }
.vscroll .track { flex: 35; }

/* sheet tabs */
.sheetbar { height: 28px; flex: none; display: flex; align-items: flex-start; background: #f4f5f4; border-top: 1px solid #a9aba9; padding-right: 19px; }
.sheet-nav { width: 100px; display: flex; gap: 25px; padding: 10px 0 0 27px; }
.sheet-tab { width: 69px; height: 25px; font-size: 13px; line-height: 16px; padding-bottom: 3px; border-left: 1px solid #b5b7b5; }
.sheet-tab.last { border-right: 1px solid #b5b7b5; border-left: 0; }
.sheet-tab.current { width: 70px; margin-top: -1px; height: 26px; background: #fdfefd; color: #217346; border-right: 1px solid #a9aba9; border-bottom: 2px solid #217346; padding-bottom: 0; }
.add { margin: 5px 0 0 32px; }
.hdots { margin: 7px 15px 0 auto; }
.hscroll { width: 38.5%; display: flex; margin-top: 6px; }
.hscroll .thumb { flex: 672; border-left: 0; }
.hscroll .track { flex: 30; }

/* status bar */
.status { height: 23px; flex: none; display: flex; align-items: center; background: #217346; border-bottom: 1px solid #5f9c7a; color: #fff; padding: 0 8px 0 7px; }
.macro { margin-left: 19px; }
.count { margin-left: auto; margin-right: 20px; }
.view { width: 38px; height: 22px; display: flex; align-items: center; justify-content: center; }
.view.on { background: #0f5f33; }
.zoom-step { margin: 0 4px 0 5px; }
.view + .zoom-step { margin: 0 3px 0 5px; }
.zoom { appearance: none; width: 101px; height: 15px; background: linear-gradient(#e4f3ea, #e4f3ea) center / 100% 1px no-repeat; }
.zoom::-webkit-slider-thumb { appearance: none; width: 4px; height: 12px; background: #fff; }
.percent { width: 42px; text-align: right; }
```
